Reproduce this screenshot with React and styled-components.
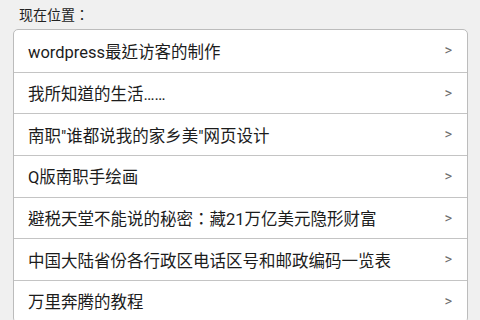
import React from 'react';
import styled, { createGlobalStyle } from 'styled-components';

const GlobalStyle = createGlobalStyle`
  html, body {
    margin: 0;
    padding: 0;
    background: #f0f0f0;
    font-family: Roboto, "Noto Sans CJK TC", sans-serif;
  }
`;

const Page = styled.div`
  width: 480px;
  height: 320px;
  overflow: hidden;
  background: #f0f0f0;
  padding: 0 12px 0 13px;
  box-sizing: border-box;
`;

const Location = styled.div`
  font-size: 14px;
  line-height: 16px;
  color: #222;
  padding: 7px 0 6px 6px;
`;

const List = styled.ul`
  list-style: none;
  margin: 0;
  padding: 0;
  background: #fff;
  border: 1px solid #bcbcbc;
  border-radius: 5px;
`;

const Row = styled.li`
  display: flex;
  align-items: center;
  justify-content: space-between;
  height: 41.7px;
  box-sizing: border-box;
  padding: 0 15px 0 14px;
  border-top: ${p => (p.$first ? 'none' : '1px solid #c4c4c4')};
  font-size: 16.5px;
  color: #1c1c1c;
`;

const Chevron = styled.span`
  font-size: 14.5px;
  color: #6e6e6e;
`;

const items = [
  'wordpress最近访客的制作',
  '我所知道的生活……',
  '南职"谁都说我的家乡美"网页设计',
  'Q版南职手绘画',
  '避税天堂不能说的秘密：藏21万亿美元隐形财富',
  '中国大陆省份各行政区电话区号和邮政编码一览表',
  '万里奔腾的教程',
];

const App = () => (
  <Page>
    <GlobalStyle />
    <Location>现在位置：</Location>
    <List>
      {items.map((t, i) => (
        <Row key={t} $first={i === 0}>
          <span>{t}</span>
          <Chevron>&gt;</Chevron>
        </Row>
      ))}
    </List>
  </Page>
);

export default App;
